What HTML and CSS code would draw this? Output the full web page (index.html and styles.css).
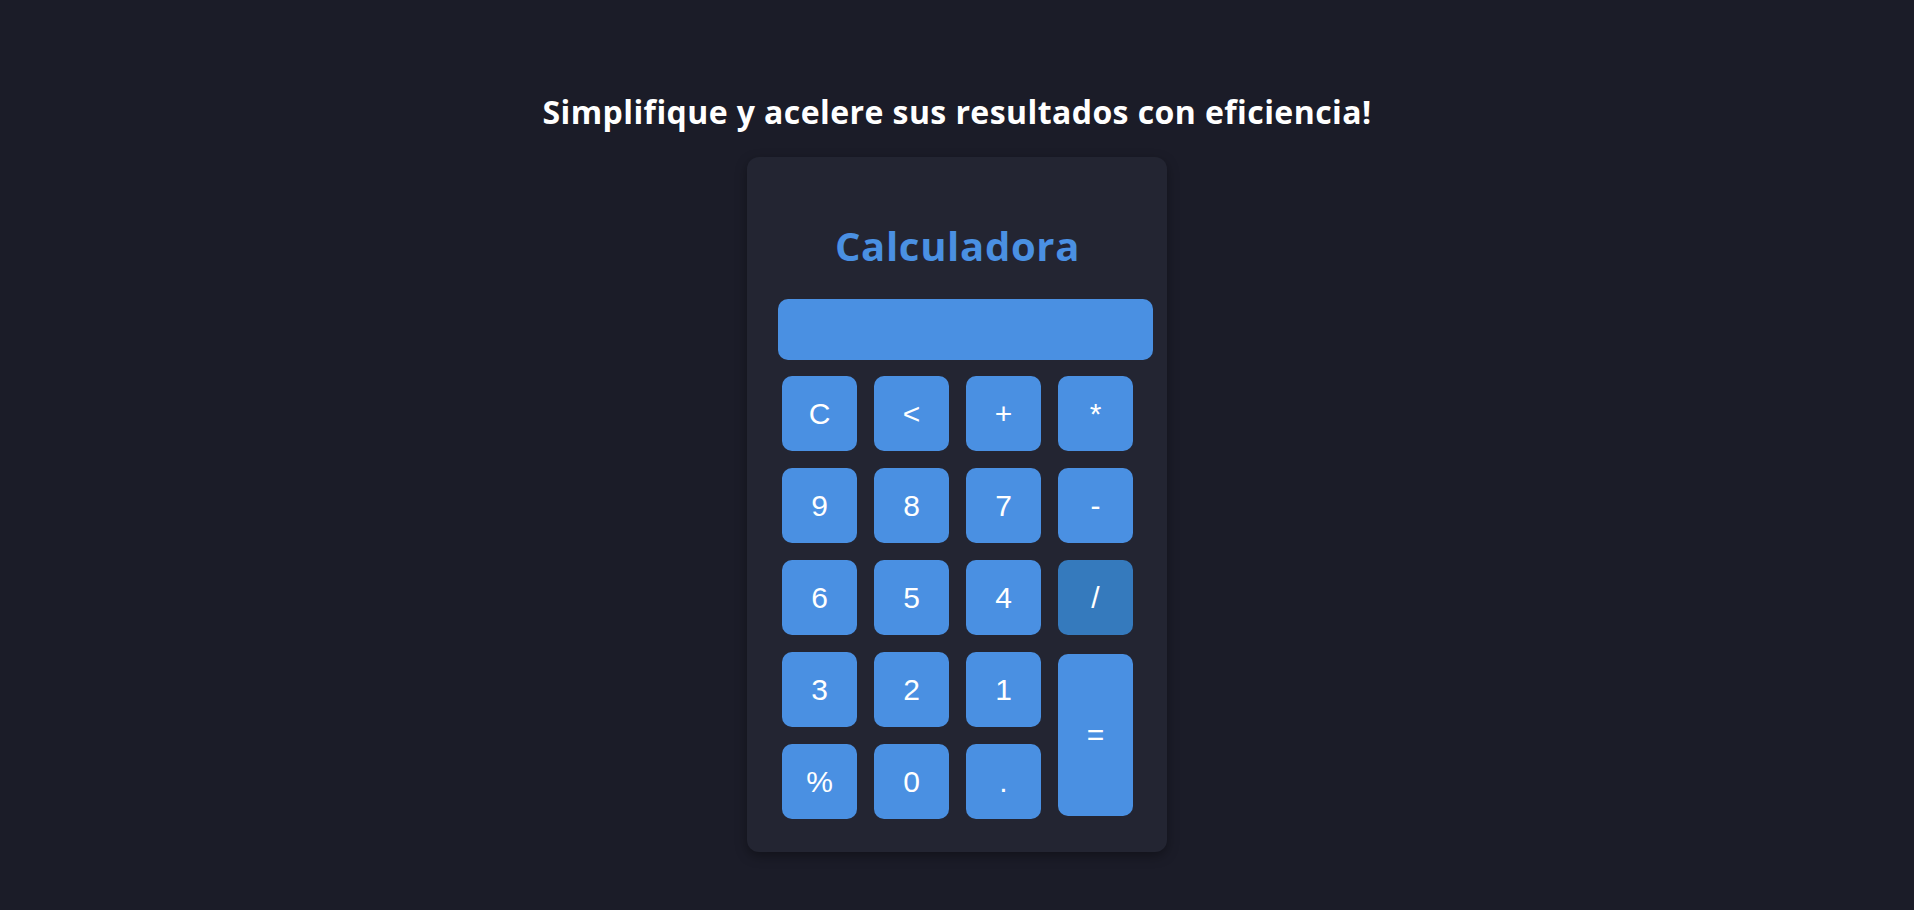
FILE: index.html
```html
<!DOCTYPE html>
<html lang="es">
<head>
<meta charset="utf-8">
<title>Calculadora</title>
<link rel="stylesheet" href="styles.css">
</head>
<body>
  <h1 class="headline">Simplifique y acelere sus resultados con eficiencia!</h1>
  <div class="calculator">
    <h2 class="calc-title">Calculadora</h2>
    <input class="display" type="text" readonly>
    <div class="keys">
      <button class="key">C</button>
      <button class="key">&lt;</button>
      <button class="key">+</button>
      <button class="key">*</button>
      <button class="key">9</button>
      <button class="key">8</button>
      <button class="key">7</button>
      <button class="key">-</button>
      <button class="key">6</button>
      <button class="key">5</button>
      <button class="key">4</button>
      <button class="key key-active">/</button>
      <button class="key">3</button>
      <button class="key">2</button>
      <button class="key">1</button>
      <button class="key key-equals">=</button>
      <button class="key">%</button>
      <button class="key">0</button>
      <button class="key">.</button>
    </div>
  </div>
</body>
</html>
```

FILE: styles.css
```css
* { box-sizing: border-box; }

body {
  margin: 0;
  padding-top: 92px;
  background: #1b1c28;
  font-family: "Open Sans", "Noto Sans", sans-serif;
  display: flex;
  flex-direction: column;
  align-items: center;
  min-height: 100vh;
}

.headline {
  margin: 0 0 25px;
  font-size: 32px;
  line-height: 40px;
  font-weight: 700;
  letter-spacing: 0.42px;
  color: #ffffff;
  text-align: center;
}

.calculator {
  width: 420px;
  padding: 30px 34px 33px 35px;
  background: #232532;
  border-radius: 12px;
  box-shadow: 0 4px 12px rgba(0, 0, 0, 0.35);
  display: flex;
  flex-direction: column;
}

.calc-title {
  margin: 35px 0 29px;
  font-size: 40px;
  line-height: 48px;
  font-weight: 700;
  letter-spacing: 0.7px;
  color: #4a90e2;
  text-align: center;
}

.display {
  display: block;
  width: 375px;
  height: 61px;
  margin: 0 0 16px -4px;
  border: none;
  border-radius: 10px;
  background: #4a90e2;
  color: #ffffff;
  font-size: 28px;
  padding: 0 12px;
  text-align: right;
  outline: none;
}

.keys {
  display: grid;
  grid-template-columns: repeat(4, 75px);
  grid-auto-rows: 75px;
  gap: 17px;
}

.key {
  display: flex;
  align-items: center;
  justify-content: center;
  width: 75px;
  height: 75px;
  padding: 0;
  border: none;
  border-radius: 10px;
  background: #4a90e2;
  color: #ffffff;
  font-family: "Liberation Sans", Arial, sans-serif;
  font-size: 30px;
  cursor: pointer;
}

.key-active {
  background: #357abd;
}

.key-equals {
  grid-row: span 2;
  height: 162px;
  margin-top: 2px;
  align-self: start;
}
```
